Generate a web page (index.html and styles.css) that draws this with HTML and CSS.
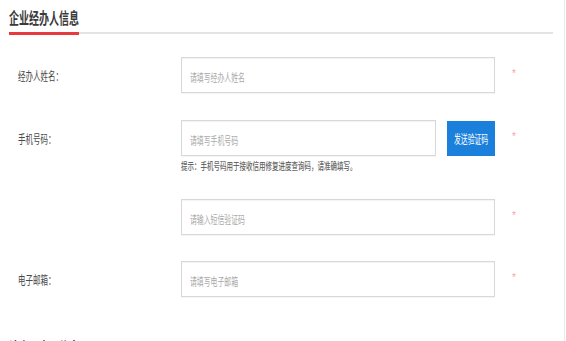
FILE: index.html
```html
<!DOCTYPE html>
<html lang="zh-CN">
<head>
<meta charset="utf-8">
<title>企业经办人信息</title>
<link rel="stylesheet" href="styles.css">
</head>
<body>
<div class="page">
  <div class="sec-head"><h2 class="sec-title"><span class="cn">企业经办人信息</span></h2></div>
  <div class="form">
    <div class="row r1">
      <div class="label"><span class="cn">经办人姓名：</span></div>
      <div class="ctrl">
        <div class="field"><span class="cn ph">请填写经办人姓名</span></div>
      </div>
      <div class="star">*</div>
    </div>
    <div class="row r2">
      <div class="label"><span class="cn">手机号码：</span></div>
      <div class="ctrl">
        <div class="line">
          <div class="field grow"><span class="cn ph">请填写手机号码</span></div>
          <button class="btn" type="button"><span class="cn btxt">发送验证码</span></button>
        </div>
        <div class="hint"><span class="cn">提示：手机号码用于接收信用修复进度查询码，请准确填写。</span></div>
      </div>
      <div class="star">*</div>
    </div>
    <div class="row r3">
      <div class="label"></div>
      <div class="ctrl">
        <div class="field"><span class="cn ph">请输入短信验证码</span></div>
      </div>
      <div class="star">*</div>
    </div>
    <div class="row r4">
      <div class="label"><span class="cn">电子邮箱：</span></div>
      <div class="ctrl">
        <div class="field"><span class="cn ph">请填写电子邮箱</span></div>
      </div>
      <div class="star">*</div>
    </div>
  </div>
  <div class="sec-head next"><h2 class="sec-title plain"><span class="cn">法定代表人信息</span></h2></div>
</div>
</body>
</html>
```

FILE: styles.css
```css
html, body {
  margin: 0;
  padding: 0;
  background: #fff;
  overflow: hidden;
}
body {
  font-family: "Noto Sans CJK SC", "Liberation Sans", sans-serif;
  color: #333;
}
.page {
  width: 564px;
  height: 341px;
  border-right: 1px solid #ececec;
  overflow: hidden;
}
.cn {
  display: inline-block;
  white-space: nowrap;
  transform: scaleX(0.625);
  transform-origin: left center;
}
.sec-head {
  margin: 0 11px 0 9px;
  padding-top: 7px;
  display: flex;
  border-bottom: 2px solid #e3e3e3;
}
.sec-title {
  margin: 0 0 -3px 0;
  font-size: 16px;
  line-height: 20px;
  font-weight: 600;
  color: #3a3a3a;
  width: 70px;
  padding-bottom: 5px;
  border-bottom: 3px solid #e8393f;
}
.sec-head.next {
  margin-top: 31px;
  border-bottom: none;
}
.sec-title.plain {
  border-bottom: none;
}
.form {
  padding-top: 23px;
}
.row {
  display: flex;
  align-items: flex-start;
}
.r2 { margin-top: 25px; }
.r3 { margin-top: 27px; }
.r4 { margin-top: 26px; }
.label {
  width: 181px;
  box-sizing: border-box;
  padding-left: 18px;
  font-size: 12px;
  line-height: 38px;
  color: #484848;
}
.ctrl {
  width: 314px;
}
.line {
  display: flex;
}
.field {
  height: 36px;
  box-sizing: border-box;
  border: 1px solid #d8d8d8;
  box-shadow: inset 0 1px 1px rgba(0,0,0,0.05), 0 1px 0 rgba(0,0,0,0.04);
  padding-left: 8px;
  font-size: 11px;
  line-height: 38px;
  background: #fff;
}
.field.grow {
  flex: 1;
}
.ph {
  color: #a9a9a9;
}
.btn {
  width: 48px;
  height: 35px;
  margin: 1px 0 0 11px;
  padding: 0 0 0 7px;
  border: none;
  background: #1a80dc;
  color: #fff;
  font-family: inherit;
  font-size: 12px;
  text-align: left;
  cursor: pointer;
}
.btxt {
  transform: scaleX(0.57);
}
.hint {
  margin-top: 4px;
  font-size: 10px;
  line-height: 12px;
  color: #666;
  font-weight: 500;
}
.hint .cn {
  transform: scaleX(0.65);
}
.star {
  margin-left: 17px;
  color: #f4a3a3;
  font-size: 10px;
  line-height: 34px;
  font-family: "Liberation Sans", sans-serif;
}
```
